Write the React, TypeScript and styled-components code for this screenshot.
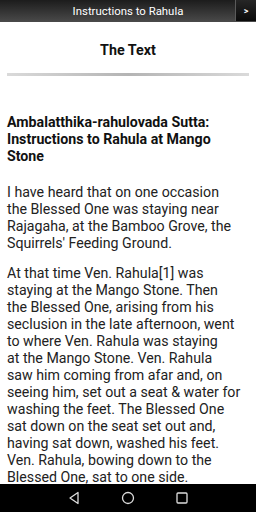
import React from "react";
import styled, { createGlobalStyle } from "styled-components";

const Global = createGlobalStyle`
  html, body { margin: 0; padding: 0; background: #fff; }
  body { font-family: Roboto, "Noto Sans", sans-serif; }
`;

const Screen = styled.div`
  width: 256px;
  height: 512px;
  display: flex;
  flex-direction: column;
  overflow: hidden;
  background: #fff;
`;

const TitleBar = styled.div`
  position: relative;
  height: 22px;
  flex: none;
  display: flex;
  align-items: center;
  justify-content: center;
  background: linear-gradient(#1c1c1c, #4a4a4a);
  color: #fff;
  font-size: 11.4px;
`;

const NextButton = styled.div`
  position: absolute;
  right: 0;
  top: 0;
  width: 20px;
  height: 21px;
  background: linear-gradient(#262626, #0a0a0a);
  border-left: 1px solid #5a5a5a;
  display: flex;
  align-items: center;
  justify-content: center;
  color: #fff;
  font-size: 9px;
  font-weight: 700;
`;

const Content = styled.div`
  flex: 1;
  overflow: hidden;
  padding: 0 7px;
`;

const PageTitle = styled.h1`
  margin: 19px 0 0;
  text-align: center;
  font-size: 14.3px;
  font-weight: 700;
  color: #111;
  line-height: 18px;
`;

const Divider = styled.div`
  margin-top: 14px;
  height: 3px;
  background: linear-gradient(to right, #dadada, #b4b4b4 50%, #dadada);
`;

const Article = styled.div`
  padding-right: 4px;
`;

const Heading = styled.h2`
  margin: 38px 0 0;
  font-size: 14.2px;
  font-weight: 700;
  color: #111;
  line-height: 17px;
`;

const Para = styled.p`
  margin: 19px 0 0;
  font-size: 14.2px;
  line-height: 17px;
  color: #222;
  & + & { margin-top: 13px; }
`;

const NavBar = styled.div`
  height: 28px;
  flex: none;
  background: #000;
  display: flex;
  align-items: center;
  justify-content: center;
  gap: 40px;
`;

const NavIcon = styled.svg`
  width: 14px;
  height: 14px;
  display: block;
`;

export default function App() {
  return (
    <>
      <Global />
      <Screen>
        <TitleBar>
          Instructions to Rahula
          <NextButton>&gt;</NextButton>
        </TitleBar>
        <Content>
          <PageTitle>The Text</PageTitle>
          <Divider />
          <Article>
            <Heading>
              Ambalatthika-rahulovada Sutta:<br />
              Instructions to Rahula at Mango<br />
              Stone
            </Heading>
            <Para>
              I have heard that on one occasion<br />
              the Blessed One was staying near<br />
              Rajagaha, at the Bamboo Grove, the<br />
              Squirrels' Feeding Ground.
            </Para>
            <Para>
              At that time Ven. Rahula[1] was<br />
              staying at the Mango Stone. Then<br />
              the Blessed One, arising from his<br />
              seclusion in the late afternoon, went<br />
              to where Ven. Rahula was staying<br />
              at the Mango Stone. Ven. Rahula<br />
              saw him coming from afar and, on<br />
              seeing him, set out a seat &amp; water for<br />
              washing the feet. The Blessed One<br />
              sat down on the seat set out and,<br />
              having sat down, washed his feet.<br />
              Ven. Rahula, bowing down to the<br />
              Blessed One, sat to one side.
            </Para>
          </Article>
        </Content>
        <NavBar>
          <NavIcon viewBox="0 0 14 14">
            <path d="M11 1.5 L3 7 L11 12.5 Z" fill="none" stroke="#ddd" strokeWidth="1.3" strokeLinejoin="round" />
          </NavIcon>
          <NavIcon viewBox="0 0 14 14">
            <circle cx="7" cy="7" r="5.5" fill="none" stroke="#ddd" strokeWidth="1.3" />
          </NavIcon>
          <NavIcon viewBox="0 0 14 14">
            <rect x="2" y="2" width="10" height="10" rx="1" fill="none" stroke="#ddd" strokeWidth="1.3" />
          </NavIcon>
        </NavBar>
      </Screen>
    </>
  );
}
